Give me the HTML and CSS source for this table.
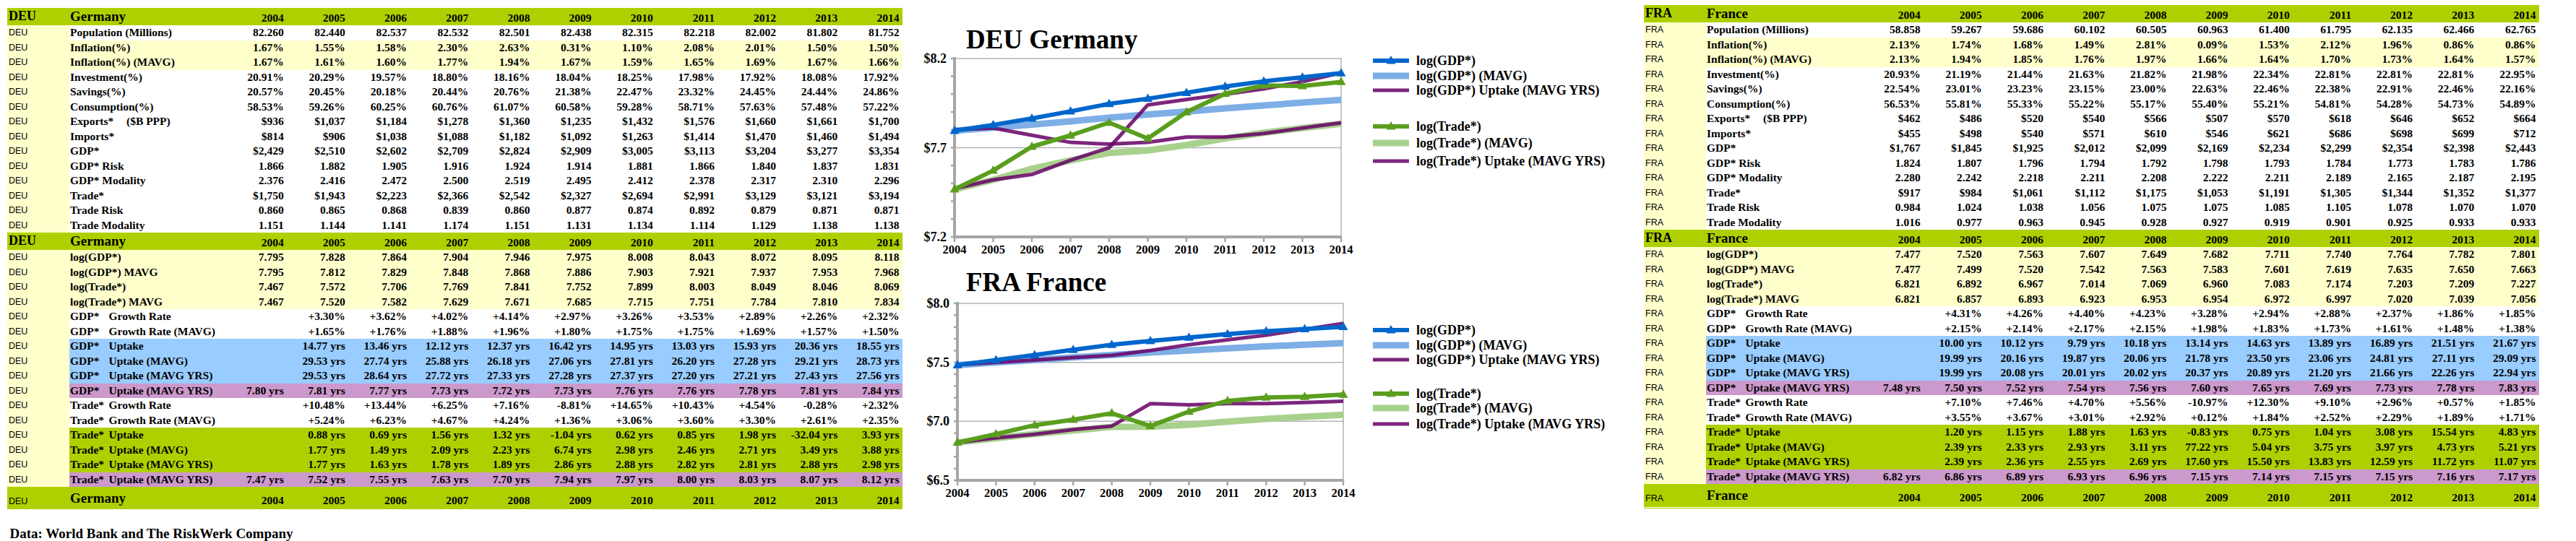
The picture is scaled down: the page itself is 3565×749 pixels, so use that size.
FILE: index.html
```html
<!DOCTYPE html>
<html>
<head>
<meta charset="utf-8">
<title>DEU / FRA</title>
<link rel="stylesheet" href="styles.css">
</head>
<body>
<div class="page">
  <div class="left">
    <table class="data">
      <colgroup><col class="code"><col class="name"><col class="yr"><col class="yr"><col class="yr"><col class="yr"><col class="yr"><col class="yr"><col class="yr"><col class="yr"><col class="yr"><col class="yr"><col class="yr"></colgroup>
      <tr class="hd"><td class="c">DEU</td><td class="n">Germany</td><td>2004</td><td>2005</td><td>2006</td><td>2007</td><td>2008</td><td>2009</td><td>2010</td><td>2011</td><td>2012</td><td>2013</td><td>2014</td></tr>
      <tr><td class="c">DEU</td><td class="n">Population (Millions)</td><td>82.260</td><td>82.440</td><td>82.537</td><td>82.532</td><td>82.501</td><td>82.438</td><td>82.315</td><td>82.218</td><td>82.002</td><td>81.802</td><td>81.752</td></tr>
      <tr class="y"><td class="c">DEU</td><td class="n">Inflation(%)</td><td>1.67%</td><td>1.55%</td><td>1.58%</td><td>2.30%</td><td>2.63%</td><td>0.31%</td><td>1.10%</td><td>2.08%</td><td>2.01%</td><td>1.50%</td><td>1.50%</td></tr>
      <tr class="y"><td class="c">DEU</td><td class="n">Inflation(%) (MAVG)</td><td>1.67%</td><td>1.61%</td><td>1.60%</td><td>1.77%</td><td>1.94%</td><td>1.67%</td><td>1.59%</td><td>1.65%</td><td>1.69%</td><td>1.67%</td><td>1.66%</td></tr>
      <tr><td class="c">DEU</td><td class="n">Investment(%)</td><td>20.91%</td><td>20.29%</td><td>19.57%</td><td>18.80%</td><td>18.16%</td><td>18.04%</td><td>18.25%</td><td>17.98%</td><td>17.92%</td><td>18.08%</td><td>17.92%</td></tr>
      <tr><td class="c">DEU</td><td class="n">Savings(%)</td><td>20.57%</td><td>20.45%</td><td>20.18%</td><td>20.44%</td><td>20.76%</td><td>21.38%</td><td>22.47%</td><td>23.32%</td><td>24.45%</td><td>24.44%</td><td>24.86%</td></tr>
      <tr><td class="c">DEU</td><td class="n">Consumption(%)</td><td>58.53%</td><td>59.26%</td><td>60.25%</td><td>60.76%</td><td>61.07%</td><td>60.58%</td><td>59.28%</td><td>58.71%</td><td>57.63%</td><td>57.48%</td><td>57.22%</td></tr>
      <tr><td class="c">DEU</td><td class="n"><span class="exp">Exports*</span>($B PPP)</td><td>$936</td><td>$1,037</td><td>$1,184</td><td>$1,278</td><td>$1,360</td><td>$1,235</td><td>$1,432</td><td>$1,576</td><td>$1,660</td><td>$1,661</td><td>$1,700</td></tr>
      <tr><td class="c">DEU</td><td class="n">Imports*</td><td>$814</td><td>$906</td><td>$1,038</td><td>$1,088</td><td>$1,182</td><td>$1,092</td><td>$1,263</td><td>$1,414</td><td>$1,470</td><td>$1,460</td><td>$1,494</td></tr>
      <tr><td class="c">DEU</td><td class="n">GDP*</td><td>$2,429</td><td>$2,510</td><td>$2,602</td><td>$2,709</td><td>$2,824</td><td>$2,909</td><td>$3,005</td><td>$3,113</td><td>$3,204</td><td>$3,277</td><td>$3,354</td></tr>
      <tr><td class="c">DEU</td><td class="n">GDP* Risk</td><td>1.866</td><td>1.882</td><td>1.905</td><td>1.916</td><td>1.924</td><td>1.914</td><td>1.881</td><td>1.866</td><td>1.840</td><td>1.837</td><td>1.831</td></tr>
      <tr><td class="c">DEU</td><td class="n">GDP* Modality</td><td>2.376</td><td>2.416</td><td>2.472</td><td>2.500</td><td>2.519</td><td>2.495</td><td>2.412</td><td>2.378</td><td>2.317</td><td>2.310</td><td>2.296</td></tr>
      <tr><td class="c">DEU</td><td class="n">Trade*</td><td>$1,750</td><td>$1,943</td><td>$2,223</td><td>$2,366</td><td>$2,542</td><td>$2,327</td><td>$2,694</td><td>$2,991</td><td>$3,129</td><td>$3,121</td><td>$3,194</td></tr>
      <tr><td class="c">DEU</td><td class="n">Trade Risk</td><td>0.860</td><td>0.865</td><td>0.868</td><td>0.839</td><td>0.860</td><td>0.877</td><td>0.874</td><td>0.892</td><td>0.879</td><td>0.871</td><td>0.871</td></tr>
      <tr><td class="c">DEU</td><td class="n">Trade Modality</td><td>1.151</td><td>1.144</td><td>1.141</td><td>1.174</td><td>1.151</td><td>1.131</td><td>1.134</td><td>1.114</td><td>1.129</td><td>1.138</td><td>1.138</td></tr>
      <tr class="hd"><td class="c">DEU</td><td class="n">Germany</td><td>2004</td><td>2005</td><td>2006</td><td>2007</td><td>2008</td><td>2009</td><td>2010</td><td>2011</td><td>2012</td><td>2013</td><td>2014</td></tr>
      <tr class="y"><td class="c">DEU</td><td class="n">log(GDP*)</td><td>7.795</td><td>7.828</td><td>7.864</td><td>7.904</td><td>7.946</td><td>7.975</td><td>8.008</td><td>8.043</td><td>8.072</td><td>8.095</td><td>8.118</td></tr>
      <tr class="y"><td class="c">DEU</td><td class="n">log(GDP*) MAVG</td><td>7.795</td><td>7.812</td><td>7.829</td><td>7.848</td><td>7.868</td><td>7.886</td><td>7.903</td><td>7.921</td><td>7.937</td><td>7.953</td><td>7.968</td></tr>
      <tr class="y"><td class="c">DEU</td><td class="n">log(Trade*)</td><td>7.467</td><td>7.572</td><td>7.706</td><td>7.769</td><td>7.841</td><td>7.752</td><td>7.899</td><td>8.003</td><td>8.049</td><td>8.046</td><td>8.069</td></tr>
      <tr class="y"><td class="c">DEU</td><td class="n">log(Trade*) MAVG</td><td>7.467</td><td>7.520</td><td>7.582</td><td>7.629</td><td>7.671</td><td>7.685</td><td>7.715</td><td>7.751</td><td>7.784</td><td>7.810</td><td>7.834</td></tr>
      <tr><td class="c">DEU</td><td class="n"><span class="pre">GDP*</span>Growth Rate</td><td></td><td>+3.30%</td><td>+3.62%</td><td>+4.02%</td><td>+4.14%</td><td>+2.97%</td><td>+3.26%</td><td>+3.53%</td><td>+2.89%</td><td>+2.26%</td><td>+2.32%</td></tr>
      <tr><td class="c">DEU</td><td class="n"><span class="pre">GDP*</span>Growth Rate (MAVG)</td><td></td><td>+1.65%</td><td>+1.76%</td><td>+1.88%</td><td>+1.96%</td><td>+1.80%</td><td>+1.75%</td><td>+1.75%</td><td>+1.69%</td><td>+1.57%</td><td>+1.50%</td></tr>
      <tr class="b"><td class="c">DEU</td><td class="n"><span class="pre">GDP*</span>Uptake</td><td></td><td>14.77 yrs</td><td>13.46 yrs</td><td>12.12 yrs</td><td>12.37 yrs</td><td>16.42 yrs</td><td>14.95 yrs</td><td>13.03 yrs</td><td>15.93 yrs</td><td>20.36 yrs</td><td>18.55 yrs</td></tr>
      <tr class="b"><td class="c">DEU</td><td class="n"><span class="pre">GDP*</span>Uptake (MAVG)</td><td></td><td>29.53 yrs</td><td>27.74 yrs</td><td>25.88 yrs</td><td>26.18 yrs</td><td>27.06 yrs</td><td>27.81 yrs</td><td>26.20 yrs</td><td>27.28 yrs</td><td>29.21 yrs</td><td>28.73 yrs</td></tr>
      <tr class="b"><td class="c">DEU</td><td class="n"><span class="pre">GDP*</span>Uptake (MAVG YRS)</td><td></td><td>29.53 yrs</td><td>28.64 yrs</td><td>27.72 yrs</td><td>27.33 yrs</td><td>27.28 yrs</td><td>27.37 yrs</td><td>27.20 yrs</td><td>27.21 yrs</td><td>27.43 yrs</td><td>27.56 yrs</td></tr>
      <tr class="p"><td class="c">DEU</td><td class="n"><span class="pre">GDP*</span>Uptake (MAVG YRS)</td><td>7.80 yrs</td><td>7.81 yrs</td><td>7.77 yrs</td><td>7.73 yrs</td><td>7.72 yrs</td><td>7.73 yrs</td><td>7.76 yrs</td><td>7.76 yrs</td><td>7.78 yrs</td><td>7.81 yrs</td><td>7.84 yrs</td></tr>
      <tr><td class="c">DEU</td><td class="n"><span class="pre">Trade*</span>Growth Rate</td><td></td><td>+10.48%</td><td>+13.44%</td><td>+6.25%</td><td>+7.16%</td><td>-8.81%</td><td>+14.65%</td><td>+10.43%</td><td>+4.54%</td><td>-0.28%</td><td>+2.32%</td></tr>
      <tr><td class="c">DEU</td><td class="n"><span class="pre">Trade*</span>Growth Rate (MAVG)</td><td></td><td>+5.24%</td><td>+6.23%</td><td>+4.67%</td><td>+4.24%</td><td>+1.36%</td><td>+3.06%</td><td>+3.60%</td><td>+3.30%</td><td>+2.61%</td><td>+2.35%</td></tr>
      <tr class="g"><td class="c">DEU</td><td class="n"><span class="pre">Trade*</span>Uptake</td><td></td><td>0.88 yrs</td><td>0.69 yrs</td><td>1.56 yrs</td><td>1.32 yrs</td><td>-1.04 yrs</td><td>0.62 yrs</td><td>0.85 yrs</td><td>1.98 yrs</td><td>-32.04 yrs</td><td>3.93 yrs</td></tr>
      <tr class="g"><td class="c">DEU</td><td class="n"><span class="pre">Trade*</span>Uptake (MAVG)</td><td></td><td>1.77 yrs</td><td>1.49 yrs</td><td>2.09 yrs</td><td>2.23 yrs</td><td>6.74 yrs</td><td>2.98 yrs</td><td>2.46 yrs</td><td>2.71 yrs</td><td>3.49 yrs</td><td>3.88 yrs</td></tr>
      <tr class="g"><td class="c">DEU</td><td class="n"><span class="pre">Trade*</span>Uptake (MAVG YRS)</td><td></td><td>1.77 yrs</td><td>1.63 yrs</td><td>1.78 yrs</td><td>1.89 yrs</td><td>2.86 yrs</td><td>2.88 yrs</td><td>2.82 yrs</td><td>2.81 yrs</td><td>2.88 yrs</td><td>2.98 yrs</td></tr>
      <tr class="p"><td class="c">DEU</td><td class="n"><span class="pre">Trade*</span>Uptake (MAVG YRS)</td><td>7.47 yrs</td><td>7.52 yrs</td><td>7.55 yrs</td><td>7.63 yrs</td><td>7.70 yrs</td><td>7.94 yrs</td><td>7.97 yrs</td><td>8.00 yrs</td><td>8.03 yrs</td><td>8.07 yrs</td><td>8.12 yrs</td></tr>
      <tr class="ft"><td class="c">DEU</td><td class="n">Germany</td><td>2004</td><td>2005</td><td>2006</td><td>2007</td><td>2008</td><td>2009</td><td>2010</td><td>2011</td><td>2012</td><td>2013</td><td>2014</td></tr>
    </table>
    <p class="source">Data: World Bank and The RiskWerk Company</p>
  </div>

  <div class="charts">
    <svg id="deu" class="chart top" width="1026" height="365"></svg>
    <svg id="fra" class="chart bottom" width="1026" height="384"></svg>
  </div>

  <div class="right">
    <table class="data fra">
      <colgroup><col class="code"><col class="name"><col class="yr"><col class="yr"><col class="yr"><col class="yr"><col class="yr"><col class="yr"><col class="yr"><col class="yr"><col class="yr"><col class="yr"><col class="yr"></colgroup>
      <tr class="hd"><td class="c">FRA</td><td class="n">France</td><td>2004</td><td>2005</td><td>2006</td><td>2007</td><td>2008</td><td>2009</td><td>2010</td><td>2011</td><td>2012</td><td>2013</td><td>2014</td></tr>
      <tr><td class="c">FRA</td><td class="n">Population (Millions)</td><td>58.858</td><td>59.267</td><td>59.686</td><td>60.102</td><td>60.505</td><td>60.963</td><td>61.400</td><td>61.795</td><td>62.135</td><td>62.466</td><td>62.765</td></tr>
      <tr class="y"><td class="c">FRA</td><td class="n">Inflation(%)</td><td>2.13%</td><td>1.74%</td><td>1.68%</td><td>1.49%</td><td>2.81%</td><td>0.09%</td><td>1.53%</td><td>2.12%</td><td>1.96%</td><td>0.86%</td><td>0.86%</td></tr>
      <tr class="y"><td class="c">FRA</td><td class="n">Inflation(%) (MAVG)</td><td>2.13%</td><td>1.94%</td><td>1.85%</td><td>1.76%</td><td>1.97%</td><td>1.66%</td><td>1.64%</td><td>1.70%</td><td>1.73%</td><td>1.64%</td><td>1.57%</td></tr>
      <tr><td class="c">FRA</td><td class="n">Investment(%)</td><td>20.93%</td><td>21.19%</td><td>21.44%</td><td>21.63%</td><td>21.82%</td><td>21.98%</td><td>22.34%</td><td>22.81%</td><td>22.81%</td><td>22.81%</td><td>22.95%</td></tr>
      <tr><td class="c">FRA</td><td class="n">Savings(%)</td><td>22.54%</td><td>23.01%</td><td>23.23%</td><td>23.15%</td><td>23.00%</td><td>22.63%</td><td>22.46%</td><td>22.38%</td><td>22.91%</td><td>22.46%</td><td>22.16%</td></tr>
      <tr><td class="c">FRA</td><td class="n">Consumption(%)</td><td>56.53%</td><td>55.81%</td><td>55.33%</td><td>55.22%</td><td>55.17%</td><td>55.40%</td><td>55.21%</td><td>54.81%</td><td>54.28%</td><td>54.73%</td><td>54.89%</td></tr>
      <tr><td class="c">FRA</td><td class="n"><span class="exp">Exports*</span>($B PPP)</td><td>$462</td><td>$486</td><td>$520</td><td>$540</td><td>$566</td><td>$507</td><td>$570</td><td>$618</td><td>$646</td><td>$652</td><td>$664</td></tr>
      <tr><td class="c">FRA</td><td class="n">Imports*</td><td>$455</td><td>$498</td><td>$540</td><td>$571</td><td>$610</td><td>$546</td><td>$621</td><td>$686</td><td>$698</td><td>$699</td><td>$712</td></tr>
      <tr><td class="c">FRA</td><td class="n">GDP*</td><td>$1,767</td><td>$1,845</td><td>$1,925</td><td>$2,012</td><td>$2,099</td><td>$2,169</td><td>$2,234</td><td>$2,299</td><td>$2,354</td><td>$2,398</td><td>$2,443</td></tr>
      <tr><td class="c">FRA</td><td class="n">GDP* Risk</td><td>1.824</td><td>1.807</td><td>1.796</td><td>1.794</td><td>1.792</td><td>1.798</td><td>1.793</td><td>1.784</td><td>1.773</td><td>1.783</td><td>1.786</td></tr>
      <tr><td class="c">FRA</td><td class="n">GDP* Modality</td><td>2.280</td><td>2.242</td><td>2.218</td><td>2.211</td><td>2.208</td><td>2.222</td><td>2.211</td><td>2.189</td><td>2.165</td><td>2.187</td><td>2.195</td></tr>
      <tr><td class="c">FRA</td><td class="n">Trade*</td><td>$917</td><td>$984</td><td>$1,061</td><td>$1,112</td><td>$1,175</td><td>$1,053</td><td>$1,191</td><td>$1,305</td><td>$1,344</td><td>$1,352</td><td>$1,377</td></tr>
      <tr><td class="c">FRA</td><td class="n">Trade Risk</td><td>0.984</td><td>1.024</td><td>1.038</td><td>1.056</td><td>1.075</td><td>1.075</td><td>1.085</td><td>1.105</td><td>1.078</td><td>1.070</td><td>1.070</td></tr>
      <tr><td class="c">FRA</td><td class="n">Trade Modality</td><td>1.016</td><td>0.977</td><td>0.963</td><td>0.945</td><td>0.928</td><td>0.927</td><td>0.919</td><td>0.901</td><td>0.925</td><td>0.933</td><td>0.933</td></tr>
      <tr class="hd"><td class="c">FRA</td><td class="n">France</td><td>2004</td><td>2005</td><td>2006</td><td>2007</td><td>2008</td><td>2009</td><td>2010</td><td>2011</td><td>2012</td><td>2013</td><td>2014</td></tr>
      <tr class="y"><td class="c">FRA</td><td class="n">log(GDP*)</td><td>7.477</td><td>7.520</td><td>7.563</td><td>7.607</td><td>7.649</td><td>7.682</td><td>7.711</td><td>7.740</td><td>7.764</td><td>7.782</td><td>7.801</td></tr>
      <tr class="y"><td class="c">FRA</td><td class="n">log(GDP*) MAVG</td><td>7.477</td><td>7.499</td><td>7.520</td><td>7.542</td><td>7.563</td><td>7.583</td><td>7.601</td><td>7.619</td><td>7.635</td><td>7.650</td><td>7.663</td></tr>
      <tr class="y"><td class="c">FRA</td><td class="n">log(Trade*)</td><td>6.821</td><td>6.892</td><td>6.967</td><td>7.014</td><td>7.069</td><td>6.960</td><td>7.083</td><td>7.174</td><td>7.203</td><td>7.209</td><td>7.227</td></tr>
      <tr class="y"><td class="c">FRA</td><td class="n">log(Trade*) MAVG</td><td>6.821</td><td>6.857</td><td>6.893</td><td>6.923</td><td>6.953</td><td>6.954</td><td>6.972</td><td>6.997</td><td>7.020</td><td>7.039</td><td>7.056</td></tr>
      <tr><td class="c">FRA</td><td class="n"><span class="pre">GDP*</span>Growth Rate</td><td></td><td>+4.31%</td><td>+4.26%</td><td>+4.40%</td><td>+4.23%</td><td>+3.28%</td><td>+2.94%</td><td>+2.88%</td><td>+2.37%</td><td>+1.86%</td><td>+1.85%</td></tr>
      <tr><td class="c">FRA</td><td class="n"><span class="pre">GDP*</span>Growth Rate (MAVG)</td><td></td><td>+2.15%</td><td>+2.14%</td><td>+2.17%</td><td>+2.15%</td><td>+1.98%</td><td>+1.83%</td><td>+1.73%</td><td>+1.61%</td><td>+1.48%</td><td>+1.38%</td></tr>
      <tr class="b"><td class="c">FRA</td><td class="n"><span class="pre">GDP*</span>Uptake</td><td></td><td>10.00 yrs</td><td>10.12 yrs</td><td>9.79 yrs</td><td>10.18 yrs</td><td>13.14 yrs</td><td>14.63 yrs</td><td>13.89 yrs</td><td>16.89 yrs</td><td>21.51 yrs</td><td>21.67 yrs</td></tr>
      <tr class="b"><td class="c">FRA</td><td class="n"><span class="pre">GDP*</span>Uptake (MAVG)</td><td></td><td>19.99 yrs</td><td>20.16 yrs</td><td>19.87 yrs</td><td>20.06 yrs</td><td>21.78 yrs</td><td>23.50 yrs</td><td>23.06 yrs</td><td>24.81 yrs</td><td>27.11 yrs</td><td>29.09 yrs</td></tr>
      <tr class="b"><td class="c">FRA</td><td class="n"><span class="pre">GDP*</span>Uptake (MAVG YRS)</td><td></td><td>19.99 yrs</td><td>20.08 yrs</td><td>20.01 yrs</td><td>20.02 yrs</td><td>20.37 yrs</td><td>20.89 yrs</td><td>21.20 yrs</td><td>21.66 yrs</td><td>22.26 yrs</td><td>22.94 yrs</td></tr>
      <tr class="p"><td class="c">FRA</td><td class="n"><span class="pre">GDP*</span>Uptake (MAVG YRS)</td><td>7.48 yrs</td><td>7.50 yrs</td><td>7.52 yrs</td><td>7.54 yrs</td><td>7.56 yrs</td><td>7.60 yrs</td><td>7.65 yrs</td><td>7.69 yrs</td><td>7.73 yrs</td><td>7.78 yrs</td><td>7.83 yrs</td></tr>
      <tr><td class="c">FRA</td><td class="n"><span class="pre">Trade*</span>Growth Rate</td><td></td><td>+7.10%</td><td>+7.46%</td><td>+4.70%</td><td>+5.56%</td><td>-10.97%</td><td>+12.30%</td><td>+9.10%</td><td>+2.96%</td><td>+0.57%</td><td>+1.85%</td></tr>
      <tr><td class="c">FRA</td><td class="n"><span class="pre">Trade*</span>Growth Rate (MAVG)</td><td></td><td>+3.55%</td><td>+3.67%</td><td>+3.01%</td><td>+2.92%</td><td>+0.12%</td><td>+1.84%</td><td>+2.52%</td><td>+2.29%</td><td>+1.89%</td><td>+1.71%</td></tr>
      <tr class="g"><td class="c">FRA</td><td class="n"><span class="pre">Trade*</span>Uptake</td><td></td><td>1.20 yrs</td><td>1.15 yrs</td><td>1.88 yrs</td><td>1.63 yrs</td><td>-0.83 yrs</td><td>0.75 yrs</td><td>1.04 yrs</td><td>3.08 yrs</td><td>15.54 yrs</td><td>4.83 yrs</td></tr>
      <tr class="g"><td class="c">FRA</td><td class="n"><span class="pre">Trade*</span>Uptake (MAVG)</td><td></td><td>2.39 yrs</td><td>2.33 yrs</td><td>2.93 yrs</td><td>3.11 yrs</td><td>77.22 yrs</td><td>5.04 yrs</td><td>3.75 yrs</td><td>3.97 yrs</td><td>4.73 yrs</td><td>5.21 yrs</td></tr>
      <tr class="g"><td class="c">FRA</td><td class="n"><span class="pre">Trade*</span>Uptake (MAVG YRS)</td><td></td><td>2.39 yrs</td><td>2.36 yrs</td><td>2.55 yrs</td><td>2.69 yrs</td><td>17.60 yrs</td><td>15.50 yrs</td><td>13.83 yrs</td><td>12.59 yrs</td><td>11.72 yrs</td><td>11.07 yrs</td></tr>
      <tr class="p"><td class="c">FRA</td><td class="n"><span class="pre">Trade*</span>Uptake (MAVG YRS)</td><td>6.82 yrs</td><td>6.86 yrs</td><td>6.89 yrs</td><td>6.93 yrs</td><td>6.96 yrs</td><td>7.15 yrs</td><td>7.14 yrs</td><td>7.15 yrs</td><td>7.15 yrs</td><td>7.16 yrs</td><td>7.17 yrs</td></tr>
      <tr class="ft"><td class="c">FRA</td><td class="n">France</td><td>2004</td><td>2005</td><td>2006</td><td>2007</td><td>2008</td><td>2009</td><td>2010</td><td>2011</td><td>2012</td><td>2013</td><td>2014</td></tr>
    </table>
  </div>
</div>
<script src="charts.js"></script>
</body>
</html>
```

FILE: styles.css
```css
html, body {
  margin: 0;
  padding: 0;
  background: #ffffff;
}
body {
  font-family: "Liberation Serif", "Times New Roman", serif;
  color: #000;
}
.page {
  display: flex;
  align-items: flex-start;
  width: 3565px;
  height: 749px;
  overflow: hidden;
}
.left {
  padding: 11px 0 0 10px;
  width: 1239px;
  flex: none;
}
.charts {
  width: 1026px;
  flex: none;
  display: flex;
  flex-direction: column;
}
.chart { display: block; }
.right {
  padding-top: 7px;
  width: 1239px;
  flex: none;
}

/* ---------- tables ---------- */
.data {
  border-collapse: collapse;
  table-layout: fixed;
  width: 1239px;
  font-weight: bold;
  font-size: 15.5px;
}
.data col.code { width: 86px; }
.data col.name { width: 216px; }
.data col.yr { width: 85.18px; }
.data td {
  padding: 0;
  height: 20.5px;
  line-height: 20.5px;
  white-space: nowrap;
  overflow: hidden;
}
.data td + td + td {
  text-align: right;
  padding-right: 4.5px;
}
.data td.c {
  font-family: "Liberation Sans", Arial, sans-serif;
  font-weight: normal;
  font-size: 12.5px;
  padding-left: 2px;
  background: #ffffcc;
}
.data td.n { padding-left: 1px; }
.pre { display: inline-block; width: 53.5px; }
.exp { display: inline-block; width: 78px; }

.data tr.y td { background: #ffffcc; }
.data tr.b td + td { background: #99ccff; }
.data tr.p td + td { background: #cc99cc; }
.data tr.g td + td { background: #afd000; }

.data tr.hd td {
  background: #afd000;
  height: 24px;
  line-height: 21px;
  vertical-align: bottom;
}
.data tr.hd td.c {
  font-family: "Liberation Serif", "Times New Roman", serif;
  font-weight: bold;
  font-size: 18px;
  padding-bottom: 2px;
  height: 22px;
}
.data tr.hd td.n {
  font-size: 19px;
  padding-bottom: 2.5px;
  height: 21.5px;
}
.data tr.ft td {
  background: #afd000;
  height: 26px;
  line-height: 21px;
  vertical-align: bottom;
  padding-bottom: 2px;
}
.data tr.ft td.n {
  font-size: 19px;
  padding-bottom: 5px;
}
.data tr.ft td.c { padding-bottom: 0; }
.fra tr.ft td { border-bottom: 3px double #afd000; }

.source {
  margin: 23px 0 0 3.5px;
  font-size: 19px;
  font-weight: bold;
}

/* ---------- charts ---------- */
.chart text {
  font-family: "Liberation Serif", "Times New Roman", serif;
  font-weight: bold;
  fill: #000;
}
.chart .ttl { font-size: 37px; }
.chart .ylab { font-size: 18px; text-anchor: end; }
.chart .xlab { font-size: 16.5px; text-anchor: middle; }
.chart .leg { font-size: 18px; }
.chart .frame { fill: none; stroke: #b3b3b3; stroke-width: 1.5; }
.chart .grid { stroke: #b3b3b3; stroke-width: 1.5; }
.chart .axis { stroke: #a6a6a6; stroke-width: 4; }
.chart .tick { stroke: #a6a6a6; stroke-width: 2.5; }
.chart .ser { fill: none; stroke-linejoin: round; stroke-linecap: butt; }
```

FILE: charts.js
```js
(function () {
  var NS = 'http://www.w3.org/2000/svg';
  function mk(parent, tag, attrs, text) {
    var e = document.createElementNS(NS, tag);
    for (var k in attrs) e.setAttribute(k, attrs[k]);
    if (text != null) e.textContent = text;
    parent.appendChild(e);
    return e;
  }
  var charts = [
    {
      id: 'deu', title: 'DEU Germany', titleY: 67,
      x0: 72, x1: 607, yT: 81, yB: 328, min: 7.2, max: 8.2, majors: [8.2, 7.7, 7.2],
      legY: [84, 105, 125, 175, 198, 223],
      s: {
        gdp: [7.795, 7.828, 7.864, 7.904, 7.946, 7.975, 8.008, 8.043, 8.072, 8.095, 8.118],
        gdpM: [7.795, 7.812, 7.829, 7.848, 7.868, 7.886, 7.903, 7.921, 7.937, 7.953, 7.968],
        gdpU: [7.80, 7.81, 7.77, 7.73, 7.72, 7.73, 7.76, 7.76, 7.78, 7.81, 7.84],
        tr: [7.467, 7.572, 7.706, 7.769, 7.841, 7.752, 7.899, 8.003, 8.049, 8.046, 8.069],
        trM: [7.467, 7.520, 7.582, 7.629, 7.671, 7.685, 7.715, 7.751, 7.784, 7.810, 7.834],
        trU: [7.47, 7.52, 7.55, 7.63, 7.70, 7.94, 7.97, 8.00, 8.03, 8.07, 8.12]
      }
    },
    {
      id: 'fra', title: 'FRA France', titleY: 38,
      x0: 76, x1: 610, yT: 55, yB: 300, min: 6.5, max: 8.0, majors: [8.0, 7.5, 7.0, 6.5],
      legY: [92, 113, 133, 180, 200, 222],
      s: {
        gdp: [7.477, 7.520, 7.563, 7.607, 7.649, 7.682, 7.711, 7.740, 7.764, 7.782, 7.801],
        gdpM: [7.477, 7.499, 7.520, 7.542, 7.563, 7.583, 7.601, 7.619, 7.635, 7.650, 7.663],
        gdpU: [7.48, 7.50, 7.52, 7.54, 7.56, 7.60, 7.65, 7.69, 7.73, 7.78, 7.83],
        tr: [6.821, 6.892, 6.967, 7.014, 7.069, 6.960, 7.083, 7.174, 7.203, 7.209, 7.227],
        trM: [6.821, 6.857, 6.893, 6.923, 6.953, 6.954, 6.972, 6.997, 7.020, 7.039, 7.056],
        trU: [6.82, 6.86, 6.89, 6.93, 6.96, 7.15, 7.14, 7.15, 7.15, 7.16, 7.17]
      }
    }
  ];
  var style = {
    gdp: { c: '#0066cc', w: 6, m: true, o: 1 },
    gdpM: { c: '#7eaee6', w: 9, m: false, o: 1 },
    gdpU: { c: '#660066', w: 5, m: false, o: 0.85 },
    tr: { c: '#5a9e1e', w: 6, m: true, o: 1 },
    trM: { c: '#a9d18e', w: 9, m: false, o: 1 },
    trU: { c: '#660066', w: 5, m: false, o: 0.85 }
  };
  var order = ['trM', 'gdpM', 'trU', 'gdpU', 'tr', 'gdp'];
  var legend = [
    ['gdp', 'log(GDP*)'], ['gdpM', 'log(GDP*) (MAVG)'], ['gdpU', 'log(GDP*) Uptake (MAVG YRS)'],
    ['tr', 'log(Trade*)'], ['trM', 'log(Trade*) (MAVG)'], ['trU', 'log(Trade*) Uptake (MAVG YRS)']
  ];
  function tri(svg, x, y, col) {
    mk(svg, 'path', { d: 'M' + x + ' ' + (y - 7) + 'L' + (x + 6.5) + ' ' + (y + 4.5) + 'L' + (x - 6.5) + ' ' + (y + 4.5) + 'Z', fill: col });
  }
  charts.forEach(function (c) {
    var svg = document.getElementById(c.id);
    var X = function (i) { return c.x0 + (c.x1 - c.x0) * i / 10; };
    var Y = function (v) { return c.yB - (v - c.min) / (c.max - c.min) * (c.yB - c.yT); };
    mk(svg, 'text', { x: 88, y: c.titleY, 'class': 'ttl' }, c.title);
    mk(svg, 'path', { d: 'M' + c.x0 + ' ' + c.yT + 'H' + c.x1 + 'V' + c.yB, 'class': 'frame' });
    c.majors.forEach(function (v) {
      if (v !== c.max && v !== c.min) mk(svg, 'line', { x1: c.x0, x2: c.x1, y1: Y(v), y2: Y(v), 'class': 'grid' });
      mk(svg, 'text', { x: c.x0 - 11, y: Y(v) + 6, 'class': 'ylab' }, '$' + v.toFixed(1));
    });
    for (var v = c.min; v <= c.max + 1e-9; v += 0.1) {
      mk(svg, 'line', { x1: c.x0 - 5, x2: c.x0, y1: Y(v), y2: Y(v), 'class': 'tick' });
    }
    mk(svg, 'line', { x1: c.x0, x2: c.x0, y1: c.yT - 2, y2: c.yB + 2, 'class': 'axis' });
    mk(svg, 'line', { x1: c.x0 - 2, x2: c.x1, y1: c.yB, y2: c.yB, 'class': 'axis' });
    for (var i = 0; i <= 10; i++) {
      mk(svg, 'line', { x1: X(i), x2: X(i), y1: c.yB, y2: c.yB + 7, 'class': 'tick' });
      mk(svg, 'text', { x: X(i), y: c.yB + 23, 'class': 'xlab' }, String(2004 + i));
    }
    order.forEach(function (k) {
      var st = style[k];
      var pts = c.s[k].map(function (v, i) { return X(i).toFixed(1) + ',' + Y(v).toFixed(1); }).join(' ');
      mk(svg, 'polyline', { points: pts, 'class': 'ser', stroke: st.c, 'stroke-width': st.w, 'stroke-opacity': st.o });
      if (st.m) c.s[k].forEach(function (v, i) { tri(svg, X(i), Y(v), st.c); });
    });
    legend.forEach(function (item, n) {
      var st = style[item[0]], y = c.legY[n];
      mk(svg, 'line', { x1: 651, x2: 701, y1: y, y2: y, stroke: st.c, 'stroke-width': st.w, 'stroke-opacity': st.o });
      if (st.m) tri(svg, 676, y, st.c);
      mk(svg, 'text', { x: 711, y: y + 6, 'class': 'leg' }, item[1]);
    });
  });
})();
```
